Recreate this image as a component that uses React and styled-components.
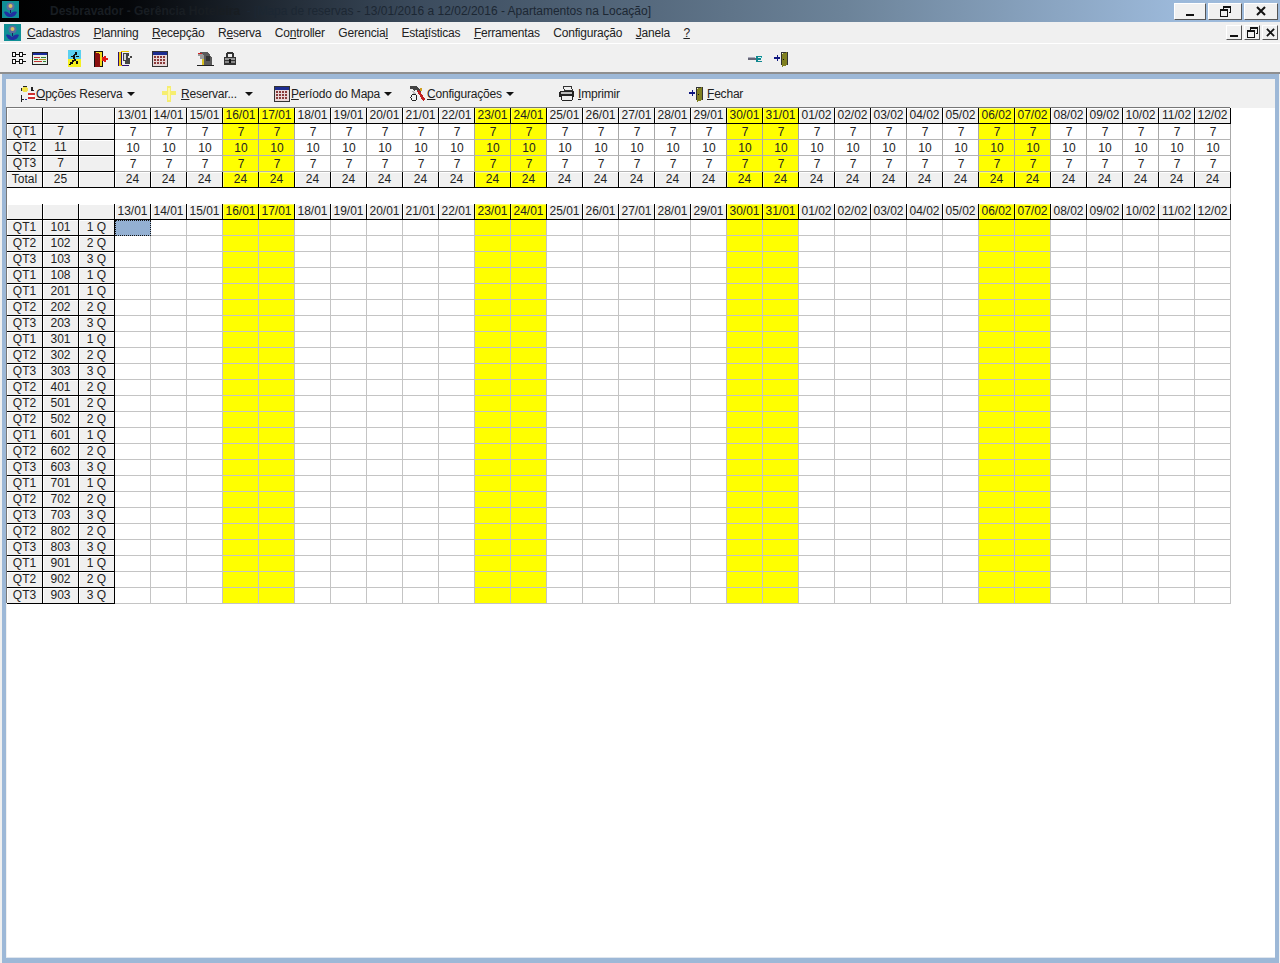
import React from "react";
import styled, { createGlobalStyle } from "styled-components";

const Global = createGlobalStyle`
  html, body { margin: 0; padding: 0; background: #f0f0f0; }
  body { font-family: "Liberation Sans", Arial, sans-serif; font-size: 12px; color: #111; }
`;

const Page = styled.div`
  width: 1280px; height: 963px; display: flex; flex-direction: column; overflow: hidden; background: #f0f0f0;
`;
const TitleBar = styled.div`
  height: 22px; flex: none; display: flex; align-items: center; padding: 0 2px 0 2px;
  background: linear-gradient(90deg, #000 0, #05070a 10%, #3c4c5e 33%, #6c8399 66%, #9cb9da 92%, #9fbbdb 100%);
`;
const TitleIcon = styled.div`width: 18px; height: 20px; flex: none; margin-right: 30px;`;
const TitleStrong = styled.span`font-weight: 700; color: #181d22; white-space: pre;`;
const TitleText = styled.span`color: #1c2733; white-space: pre; font-size: 12px;`;
const Spacer = styled.div`flex: 1;`;
const WinBtn = styled.div`
  width: ${p => p.$w}px; height: ${p => p.$h}px; margin-left: 2px; flex: none; background: #f0f0f0;
  display: flex; align-items: center; justify-content: center; box-sizing: border-box;
  border: 1px solid; border-color: #fff #555 #555 #fff;
`;
const MenuBar = styled.div`
  height: 21px; flex: none; display: flex; align-items: center; padding: 0 2px 0 4px; background: #f0f0f0;
  border-bottom: 1px solid #fff;
`;
const MenuLogo = styled.div`width: 17px; height: 17px; margin-right: 6px; flex: none;`;
const MenuList = styled.div`display: flex; gap: 13.5px;`;
const MenuItem = styled.span`font-size: 12px; color: #222; letter-spacing: -0.2px; u { text-underline-offset: 1px; }`;
const IconBar = styled.div`
  height: 27px; flex: none; display: flex; align-items: center; background: #f0f0f0;
  border-bottom: 2px solid #8f8f8f; padding-left: 12px; padding-top: 1px;
`;
const IconSlot = styled.div`
  width: ${p => p.$w}px; flex: none; height: 18px; display: flex; align-items: center;
`;
const Frame = styled.div`
  flex: 1; min-height: 0; margin-left: 2px; margin-right: 1px; background: #9db8d7; padding: 5px 4px 5px 4px;
  display: flex;
`;
const Inner = styled.div`
  flex: 1; min-width: 0; background: #fff; display: flex; flex-direction: column; border-bottom: 1px solid #dfe6ee;
  box-shadow: inset 1px 0 0 #f0f0f0;
`;
const OptionBar = styled.div`
  height: 29px; flex: none; display: flex; align-items: center; background: #f0f0f0; padding-left: 14px;
`;
const OptionBtn = styled.div`
  width: ${p => p.$w}px; flex: none; display: flex; align-items: center; gap: ${p => p.$gap ?? 1}px;
  color: #222; font-size: 12px; letter-spacing: -0.2px; white-space: nowrap;
`;
const Caret = styled.span`
  width: 0; height: 0; border-left: 4px solid transparent; border-right: 4px solid transparent;
  border-top: 4px solid #111; margin-left: 3px;
`;
const Grid = styled.div`
  margin-left: 1px; width: 1224px; display: grid; grid-template-columns: repeat(34, 36px); grid-auto-rows: 16px;
  box-shadow: -1px -1px 0 #777;
  background: #fff;
`;
const Fixed = styled.div`
  box-sizing: border-box; background: ${p => p.$yellow ? "#ffff00" : "#f0f0f0"}; border-right: 1px solid #000; border-bottom: 1px solid #000;
  box-shadow: inset 1px 1px 0 ${p => p.$yellow ? "#ffff66" : "#fff"};
  text-align: center; line-height: 15px; font-size: 12px; color: #222; white-space: nowrap; overflow: hidden;
`;
const Data = styled.div`
  box-sizing: border-box; background: ${p => p.$yellow ? "#ffff00" : "#fff"}; border-right: 1px solid #a8a8a8; border-bottom: 1px solid #b4b4b4;
  text-align: center; line-height: 17px; font-size: 12px; color: #222; padding-left: 1px;
`;
const Cell = styled.div`
  box-sizing: border-box; background: ${p => p.$yellow ? "#ffff00" : "#fff"};
  border-right: 1px solid #c4c4c4; border-bottom: 1px solid #c4c4c4;
`;
const Selected = styled.div`
  box-sizing: border-box; background: #93b0d2; border: 1px dotted #111;
`;
const GapRow = styled.div`
  grid-column: 1 / -1; background: #fff; border-right: 1px solid #c4c4c4; box-sizing: border-box;
`;

const days = [];
for (let d = 13; d <= 31; d++) if (d !== 0) days.push(`${d}/01`);
for (let d = 1; d <= 12; d++) days.push(`${String(d).padStart(2, "0")}/02`);
const yellow = new Set(["16/01","17/01","23/01","24/01","30/01","31/01","06/02","07/02"]);

const summary = [["QT1","7","7"],["QT2","11","10"],["QT3","7","7"]];
const rooms = [
  ["QT1","101","1 Q"],["QT2","102","2 Q"],["QT3","103","3 Q"],["QT1","108","1 Q"],["QT1","201","1 Q"],["QT2","202","2 Q"],
  ["QT3","203","3 Q"],["QT1","301","1 Q"],["QT2","302","2 Q"],["QT3","303","3 Q"],["QT2","401","2 Q"],["QT2","501","2 Q"],
  ["QT2","502","2 Q"],["QT1","601","1 Q"],["QT2","602","2 Q"],["QT3","603","3 Q"],["QT1","701","1 Q"],["QT2","702","2 Q"],
  ["QT3","703","3 Q"],["QT2","802","2 Q"],["QT3","803","3 Q"],["QT1","901","1 Q"],["QT2","902","2 Q"],["QT3","903","3 Q"],
];

const Px = ({ w = 16, h = 16, children }) => (
  <svg width={w} height={h} viewBox={`0 0 ${w} ${h}`} shapeRendering="crispEdges" style={{ display: "block", flex: "none" }}>{children}</svg>
);
const R = ({ x, y, w = 1, h = 1, c }) => <rect x={x} y={y} width={w} height={h} fill={c} />;

const Logo = ({ s = 17 }) => (
  <svg width={s} height={s} viewBox="0 0 17 17" style={{ display: "block" }}>
    <rect width="17" height="17" fill="#0f8f96" />
    <circle cx="8.5" cy="5.5" r="4" fill="#5a6ea0" />
    <circle cx="8.5" cy="5" r="2" fill="#d8c060" />
    <path d="M8 9h1v3H8z" fill="#182060" />
    <path d="M2 11c2-1 4 0 6 2 2-2 4-3 7-2-1 3-3 5-7 5-3 0-5-2-6-5z" fill="#2030a0" />
  </svg>
);
const TreeIcon = () => (
  <Px w={15} h={13}>
    {[[0,0],[7,0],[0,7],[7,7]].map(([x,y],i) => (
      <g key={i}><R x={x} y={y} w={4} h={5} c="#111"/><R x={x+1} y={y+1} w={2} h={3} c="#fff"/></g>
    ))}
    <R x={4} y={2} w={3} c="#111"/><R x={4} y={9} w={3} c="#111"/><R x={11} y={2} w={3} c="#111"/><R x={11} y={9} w={3} c="#111"/>
  </Px>
);
const FormIcon = () => (
  <Px w={16} h={13}>
    <R x={0} y={0} w={16} h={13} c="#222"/><R x={1} y={1} w={14} h={2} c="#1a2a9a"/><R x={1} y={3} w={14} h={9} c="#e8f0e8"/>
    <R x={2} y={5} w={6} c="#c03030"/><R x={9} y={5} w={5} c="#308030"/><R x={2} y={7} w={4} c="#308030"/><R x={7} y={7} w={7} c="#b09020"/><R x={2} y={9} w={8} c="#c03030"/><R x={11} y={9} w={3} c="#308030"/>
  </Px>
);
const WalkIcon = () => (
  <Px w={13} h={17}>
    <R x={0} y={0} w={13} h={9} c="#5ad0f0"/><R x={0} y={9} w={13} h={8} c="#f4f020"/>
    <path d="M7 2h2v2H7zM6 4h3v1H6zM5 5h2v4H5zM8 6h3v1H8zM3 6h2v1H3zM6 9h2v2H6zM8 11h2v3H8zM4 10h2v2H4zM2 12h3v2H2zM1 14h2v1H1z" fill="#111"/>
  </Px>
);
const DoorRedIcon = () => (
  <Px w={14} h={16}>
    <R x={0} y={0} w={9} h={16} c="#111"/><R x={1} y={1} w={7} h={14} c="#f0d820"/><path d="M1 1l5 2v13H1z" fill="#8a1010"/>
    <R x={8} y={6} w={3} h={4} c="#e01818"/><R x={10} y={5} w={2} h={6} c="#e01818"/><R x={12} y={7} w={2} h={2} c="#e01818"/>
  </Px>
);
const FaceIcon = () => (
  <Px w={15} h={17}>
    <path d="M3 1h8v1H3zM1 2h3v14H1zM3 15h8v1H3z" fill="#f2c800"/>
    <path d="M0 2h1v14H0zM4 1v1h-1v13h8v1H4" fill="#301070"/>
    <path d="M5 3h6v3h3v2h-2v6H7v-3H5z" fill="#444"/><path d="M6 4h2v6H6z" fill="#d8d8d8"/><R x={10} y={6} w={2} h={2} c="#e8e8e8"/>
  </Px>
);
const CalIcon = () => (
  <Px w={16} h={16}>
    <R x={0} y={0} w={16} h={16} c="#333"/><R x={1} y={1} w={14} h={3} c="#1c2c90"/><R x={1} y={4} w={14} h={11} c="#e8d8d8"/>
    {[5,8,11].flatMap(y => [2,5,8,11].map(x => <R key={x+"-"+y} x={x} y={y} w={2} h={2} c="#8a3a3a"/>))}
  </Px>
);
const MailIcon = () => (
  <Px w={17} h={17}>
    <path d="M3 2h7l3 3 2 3v7H5V7L3 5z" fill="#5a5a5a"/><path d="M1 3h4l2 3v3H3V6H1z" fill="#9a9a9a"/>
    <path d="M1 3h4v1H1z" fill="#d02020"/><R x={5} y={9} w={2} h={7} c="#d8c020"/><R x={0} y={15} w={17} h={1} c="#222"/><R x={9} y={6} w={4} h={5} c="#333"/>
  </Px>
);
const LockIcon = () => (
  <Px w={14} h={15}>
    <path d="M4 1h6v1h1v5H9V3H5v4H3V2h1z" fill="#333"/><R x={1} y={6} w={12} h={8} c="#333"/><R x={2} y={7} w={10} h={2} c="#999"/><R x={2} y={10} w={10} h={2} c="#888"/><R x={6} y={8} w={2} h={4} c="#111"/>
  </Px>
);
const KeyIcon = () => (
  <Px w={15} h={8}>
    <R x={0} y={3} w={9} h={2} c="#667"/><R x={0} y={2} w={7} h={1} c="#aab"/><path d="M8 1h6v1h-4v4h4v1H8z" fill="#108890"/><R x={10} y={3} w={3} h={2} c="#108890"/><R x={13} y={2} w={1} h={1} c="#20c8c8"/>
  </Px>
);
const ExitIcon = () => (
  <Px w={17} h={16}>
    <path d="M2 6h3V4h1v2h2v2H6v2H5V8H2z" fill="#101880"/>
    <path d="M9 1h7v13H9z" fill="#333"/><path d="M10 2h5v11h-5z" fill="#f0f0d0"/><path d="M10 3l5-2v13l-5 2z" fill="#808020"/><R x={11} y={8} w={1} h={1} c="#111"/>
  </Px>
);
const OptionsIcon = () => (
  <Px w={15} h={16}>
    <path d="M3 1h4v1h1v3H7v1H3V5H2V2h1z" fill="#f2e24a"/><path d="M3 0h4v1H3zM1 2h1v3H1z" fill="#222"/>
    <R x={8} y={7} w={7} h={2} c="#d03030"/><R x={8} y={11} w={7} h={2} c="#d03030"/><R x={9} y={9} w={5} h={2} c="#fff"/>
    <path d="M11 1h2v3h1v1h-3zM1 9h1v4h2v1H2v2H1z" fill="#222"/><R x={5} y={13} w={2} h={1} c="#2a3aa0"/>
  </Px>
);
const CrossIcon = () => (
  <Px w={14} h={16}>
    <R x={5} y={0} w={4} h={16} c="#f6ee70"/><R x={0} y={5} w={14} h={4} c="#f6ee70"/><R x={6} y={2} w={2} h={12} c="#fff8a0"/>
  </Px>
);
const ToolsIcon = () => (
  <Px w={17} h={17}>
    <path d="M1 1h6l5 5-2 2-3-3-2 1-2-2H1z" fill="#444"/><path d="M8 6l2-1 6 9-2 2z" fill="#c02020"/><path d="M3 6l2 0 2 3-2 1z" fill="#bbb"/>
    <circle cx="5" cy="12.5" r="3" fill="none" stroke="#222" /><path d="M11 3h2v3h-2z" fill="#d0a020"/>
  </Px>
);
const PrinterIcon = () => (
  <Px w={17} h={15}>
    <path d="M5 0h9l1 5H6z" fill="#333"/><path d="M6 1h7l1 3H7z" fill="#eee"/><path d="M2 5h13l1 1v5H1V6z" fill="#222"/><path d="M3 6h11v2H3z" fill="#bbb"/><path d="M4 10h10v4H4z" fill="#eee"/><path d="M4 14h10v1H4zM3 10h1v4H3zM14 10h1v4h-1z" fill="#222"/>
  </Px>
);
const Restore = ({ s = 1 }) => (
  <Px w={11} h={11}>
    <path d="M3 0h8v7H9V6h1V2H4v1H3z" fill="#111"/><path d="M0 3h8v8H0zM1 5v5h6V5z" fill="#111"/>
  </Px>
);
const Close = ({ w = 10, sw = 2 }) => (
  <svg width={w} height={w} viewBox="0 0 10 10" style={{ display: "block" }}>
    <path d="M1 1l8 8M9 1l-8 8" stroke="#111" strokeWidth={sw} />
  </svg>
);
const Minimize = ({ w = 8 }) => <Px w={w} h={9}><R x={0} y={7} w={w} h={2} c="#111"/></Px>;

const Und = ({ a = "", u, b = "" }) => <MenuItem>{a}<u>{u}</u>{b}</MenuItem>;

export default function App() {
  const topHead = (
    <>
      <Fixed /><Fixed /><Fixed />
      {days.map(d => <Fixed key={d} $yellow={yellow.has(d)}>{d}</Fixed>)}
    </>
  );
  return (
    <Page>
      <Global />
      <TitleBar>
        <TitleIcon><Logo s={17} /></TitleIcon>
        <TitleStrong>Desbravador - Gerência Hoteleira</TitleStrong>
        <TitleText>  - [Mapa de reservas - 13/01/2016 a 12/02/2016 - Apartamentos na Locação]</TitleText>
        <Spacer />
        <WinBtn $w={32} $h={17}><Minimize /></WinBtn>
        <WinBtn $w={34} $h={17}><Restore /></WinBtn>
        <WinBtn $w={34} $h={17}><Close /></WinBtn>
      </TitleBar>
      <MenuBar>
        <MenuLogo><Logo /></MenuLogo>
        <MenuList>
          <Und u="C" b="adastros" />
          <Und u="P" b="lanning" />
          <Und u="R" b="ecepção" />
          <Und a="R" u="e" b="serva" />
          <Und a="Co" u="n" b="troller" />
          <Und a="Gerencia" u="l" />
          <Und a="Esta" u="t" b="ísticas" />
          <Und u="F" b="erramentas" />
          <Und a="Configuração" u="" />
          <Und u="J" b="anela" />
          <Und u="?" />
        </MenuList>
        <Spacer />
        <WinBtn $w={16} $h={15}><Minimize /></WinBtn>
        <WinBtn $w={16} $h={15}><Restore /></WinBtn>
        <WinBtn $w={16} $h={15}><Close w={9} /></WinBtn>
      </MenuBar>
      <IconBar>
        <IconSlot $w={20}><TreeIcon /></IconSlot>
        <IconSlot $w={36}><FormIcon /></IconSlot>
        <IconSlot $w={26}><WalkIcon /></IconSlot>
        <IconSlot $w={24}><DoorRedIcon /></IconSlot>
        <IconSlot $w={34}><FaceIcon /></IconSlot>
        <IconSlot $w={45}><CalIcon /></IconSlot>
        <IconSlot $w={26}><MailIcon /></IconSlot>
        <IconSlot $w={525}><LockIcon /></IconSlot>
        <IconSlot $w={24}><KeyIcon /></IconSlot>
        <IconSlot $w={20}><ExitIcon /></IconSlot>
      </IconBar>
      <Frame>
        <Inner>
          <OptionBar>
            <OptionBtn $w={142}><OptionsIcon /> <span><u>O</u>pções Reserva</span><Caret /></OptionBtn>
            <OptionBtn $w={112} $gap={5}><CrossIcon /> <span><u>R</u>eservar...</span><Caret /></OptionBtn>
            <OptionBtn $w={135}><CalIcon /> <span><u>P</u>eríodo do Mapa</span><Caret /></OptionBtn>
            <OptionBtn $w={149}><ToolsIcon /> <span><u>C</u>onfigurações</span><Caret /></OptionBtn>
            <OptionBtn $w={129} $gap={3}><PrinterIcon /> <span><u>I</u>mprimir</span></OptionBtn>
            <OptionBtn $w={100} $gap={3}><ExitIcon /> <span><u>F</u>echar</span></OptionBtn>
          </OptionBar>
          <Grid>
            {topHead}
            {summary.map(([a, b, v]) => (
              <React.Fragment key={a}>
                <Fixed>{a}</Fixed><Fixed>{b}</Fixed><Fixed />
                {days.map(d => <Data key={d} $yellow={yellow.has(d)}>{v}</Data>)}
              </React.Fragment>
            ))}
            <Fixed>Total</Fixed><Fixed>25</Fixed><Fixed />
            {days.map(d => <Fixed key={d} $yellow={yellow.has(d)}>24</Fixed>)}
            <GapRow />
            {topHead}
            {rooms.map(([a, b, c], r) => (
              <React.Fragment key={b}>
                <Fixed>{a}</Fixed><Fixed>{b}</Fixed><Fixed>{c}</Fixed>
                {days.map((d, i) => r === 0 && i === 0
                  ? <Selected key={d} />
                  : <Cell key={d} $yellow={yellow.has(d)} />)}
              </React.Fragment>
            ))}
          </Grid>
        </Inner>
      </Frame>
    </Page>
  );
}
